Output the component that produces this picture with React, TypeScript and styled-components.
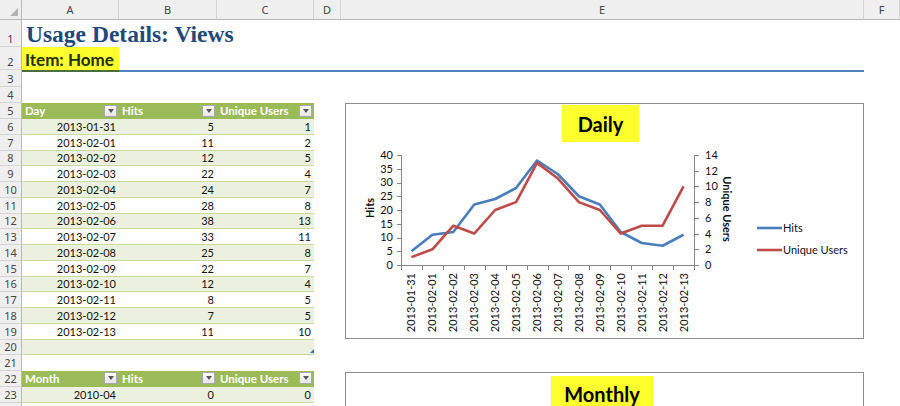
import React from "react";
import styled, { createGlobalStyle } from "styled-components";

const COLW = [22, 97, 98, 97, 27, 523];
const COLS = `${COLW.map((w) => w + "px").join(" ")} 1fr`;

const Global = createGlobalStyle`
  html, body { margin: 0; padding: 0; background: #fff; overflow: hidden; }
  body { font-family: Lato, "Liberation Sans", sans-serif; }
`;

const Sheet = styled.div`
  position: relative;
  width: 900px;
  height: 406px;
  overflow: hidden;
  background: #fff;
`;

const HeaderRow = styled.div`
  display: grid;
  grid-template-columns: ${COLS};
  height: 20px;
  box-sizing: border-box;
  background: #efefef;
  border-bottom: 1px solid #b9b9b9;
`;

const ColHead = styled.div<{ $corner?: boolean }>`
  position: relative;
  display: flex;
  align-items: center;
  justify-content: center;
  border-right: 1px solid ${(p) => (p.$corner ? "#b9b9b9" : "#d4d4d4")};
  font-family: "Noto Sans", "DejaVu Sans", sans-serif;
  font-size: 11px;
  color: #444;
  &::after {
    content: "";
    display: ${(p) => (p.$corner ? "block" : "none")};
    position: absolute;
    right: 3px;
    bottom: 3px;
    width: 0;
    height: 0;
    border-left: 8px solid transparent;
    border-bottom: 8px solid #b4b4b4;
  }
`;

const Row = styled.div<{ $h: number }>`
  display: grid;
  grid-template-columns: ${COLS};
  height: ${(p) => p.$h}px;
`;

const RowNum = styled.div<{ $bottom?: boolean }>`
  display: flex;
  align-items: ${(p) => (p.$bottom ? "flex-end" : "center")};
  justify-content: center;
  box-sizing: border-box;
  padding-bottom: ${(p) => (p.$bottom ? "2px" : "0")};
  background: #efefef;
  border-right: 1px solid #b9b9b9;
  border-bottom: 1px solid #d4d4d4;
  font-family: "Noto Sans", "DejaVu Sans", sans-serif;
  font-size: 11px;
  line-height: 1;
  color: #444;
`;

const TitleCell = styled.div`
  grid-column: 2 / span 5;
  display: flex;
  align-items: flex-end;
  padding: 0 0 1px 4px;
  font-family: "Liberation Serif", "DejaVu Serif", serif;
  font-weight: 700;
  font-size: 23.5px;
  line-height: 1;
  color: #1f497d;
  white-space: nowrap;
`;

const ItemCell = styled.div`
  display: flex;
  align-items: flex-end;
  padding: 0 0 2px 3px;
  background: #ffff2e;
  font-weight: 700;
  font-size: 17px;
  line-height: 1;
  color: #22300e;
  white-space: nowrap;
`;

const RuleCell = styled.div<{ $color: string; $span?: number }>`
  grid-column: span ${(p) => p.$span ?? 1};
  border-top: 2.5px solid ${(p) => p.$color};
`;

const Blank = styled.div<{ $span?: number }>`
  grid-column: span ${(p) => p.$span ?? 1};
`;

type Tone = "head" | "green" | "white";

const TCell = styled.div<{ $tone: Tone; $align?: "left" | "right"; $handle?: boolean }>`
  position: relative;
  display: flex;
  align-items: center;
  justify-content: ${(p) => (p.$align === "left" ? "space-between" : "flex-end")};
  box-sizing: border-box;
  padding: 0 3px 0 3px;
  background: ${(p) => (p.$tone === "head" ? "#9bbb59" : p.$tone === "green" ? "#ebf1de" : "#fff")};
  border-bottom: 1px solid ${(p) => (p.$tone === "head" ? "#9bbb59" : "#c9dba4")};
  color: ${(p) => (p.$tone === "head" ? "#fff" : "#111")};
  font-weight: ${(p) => (p.$tone === "head" ? 700 : 400)};
  font-size: ${(p) => (p.$tone === "head" ? "11.5px" : "11px")};
  line-height: 1;
  white-space: nowrap;
  &::after {
    content: "";
    display: ${(p) => (p.$handle ? "block" : "none")};
    position: absolute;
    right: 0;
    bottom: 1px;
    width: 0;
    height: 0;
    border-left: 4px solid transparent;
    border-bottom: 4px solid #3f6fb0;
  }
`;

const FilterBtn = styled.span`
  display: flex;
  align-items: center;
  justify-content: center;
  width: 13px;
  height: 12px;
  margin-right: -1px;
  box-sizing: border-box;
  border: 1px solid #a9a9a9;
  background: linear-gradient(#fbfbfb, #e6e6e6);
  &::before {
    content: "";
    width: 0;
    height: 0;
    border-left: 3.5px solid transparent;
    border-right: 3.5px solid transparent;
    border-top: 4px solid #555;
  }
`;

const ChartFrame = styled.div<{ $top: number; $height: number }>`
  position: absolute;
  left: 345px;
  top: ${(p) => p.$top}px;
  width: 519px;
  height: ${(p) => p.$height}px;
  box-sizing: border-box;
  border: 1px solid #8c8c8c;
  background: #fff;
  display: flex;
  flex-direction: column;
  align-items: flex-start;
`;

const ChartTitle = styled.div<{ $w: number; $h: number; $mt: number; $ml: number }>`
  width: ${(p) => p.$w}px;
  height: ${(p) => p.$h}px;
  margin: ${(p) => p.$mt}px 0 0 ${(p) => p.$ml}px;
  display: flex;
  align-items: center;
  justify-content: center;
  background: #ffff2e;
  font-weight: 700;
  font-size: 20px;
  color: #000;
  flex-shrink: 0;
`;

const PlotSvg = styled.svg`
  display: block;
  flex: none;
  font-family: Lato, "Liberation Sans", sans-serif;
`;

const days = [
  "2013-01-31", "2013-02-01", "2013-02-02", "2013-02-03", "2013-02-04", "2013-02-05", "2013-02-06",
  "2013-02-07", "2013-02-08", "2013-02-09", "2013-02-10", "2013-02-11", "2013-02-12", "2013-02-13",
];
const hits = [5, 11, 12, 22, 24, 28, 38, 33, 25, 22, 12, 8, 7, 11];
const users = [1, 2, 5, 4, 7, 8, 13, 11, 8, 7, 4, 5, 5, 10];

const X0 = 55;
const X1 = 348;
const Y0 = 123;
const PH = 110;
const CW = (X1 - X0) / 14;
const AX = "#868686";
const BLUE = "#4a7ebb";
const RED = "#be4b48";

function DailyPlot() {
  const cx = (i: number) => X0 + CW * (i + 0.5);
  const hy = (v: number) => Y0 - (v * PH) / 40;
  const uy = (v: number) => Y0 - (v * PH) / 14;
  const hitPts = hits.map((v, i) => `${cx(i)},${hy(v)}`).join(" ");
  const userPts = users.map((v, i) => `${cx(i)},${uy(v)}`).join(" ");
  const left = [0, 5, 10, 15, 20, 25, 30, 35, 40];
  const right = [0, 2, 4, 6, 8, 10, 12, 14];
  return (
    <PlotSvg width={517} height={196} viewBox="0 0 517 196">
      <g stroke={AX} strokeWidth={1}>
        <line x1={X0 + 0.5} y1={Y0 - PH} x2={X0 + 0.5} y2={Y0} />
        <line x1={X1 + 0.5} y1={Y0 - PH} x2={X1 + 0.5} y2={Y0} />
        <line x1={X0} y1={Y0 + 0.5} x2={X1 + 1} y2={Y0 + 0.5} />
        {left.map((v) => (
          <line key={"lt" + v} x1={X0 - 4} x2={X0} y1={Math.round(hy(v)) + 0.5} y2={Math.round(hy(v)) + 0.5} />
        ))}
        {right.map((v) => (
          <line key={"rt" + v} x1={X1 + 1} x2={X1 + 5} y1={Math.round(uy(v)) + 0.5} y2={Math.round(uy(v)) + 0.5} />
        ))}
        {Array.from({ length: 15 }, (_, i) => (
          <line key={"xt" + i} x1={Math.round(X0 + CW * i) + 0.5} x2={Math.round(X0 + CW * i) + 0.5} y1={Y0} y2={Y0 + 5} />
        ))}
      </g>
      <g fontSize={11} fill="#111">
        {left.map((v) => (
          <text key={"ll" + v} x={47} y={hy(v)} dy="0.36em" textAnchor="end">
            {v}
          </text>
        ))}
        {right.map((v) => (
          <text key={"rl" + v} x={359} y={uy(v)} dy="0.36em" textAnchor="start">
            {v}
          </text>
        ))}
        {days.map((d, i) => (
          <text key={d} transform={`translate(${cx(i)},131) rotate(-90)`} dy="0.36em" textAnchor="end">
            {d}
          </text>
        ))}
        <text transform="translate(24,66) rotate(-90)" dy="0.36em" textAnchor="middle" fontWeight={700}>
          Hits
        </text>
        <text transform="translate(381,67) rotate(90)" dy="0.36em" textAnchor="middle" fontWeight={700}>
          Unique Users
        </text>
        <text x={437} y={86} dy="0.36em">Hits</text>
        <text x={437} y={108} dy="0.36em">Unique Users</text>
      </g>
      <polyline points={hitPts} fill="none" stroke={BLUE} strokeWidth={2.6} strokeLinejoin="round" />
      <polyline points={userPts} fill="none" stroke={RED} strokeWidth={2.6} strokeLinejoin="round" />
      <line x1={411} x2={436} y1={86} y2={86} stroke={BLUE} strokeWidth={2.6} />
      <line x1={411} x2={436} y1={108} y2={108} stroke={RED} strokeWidth={2.6} />
    </PlotSvg>
  );
}

type DataRow = { n: number; tone: Tone; a: string; b: string; c: string; handle?: boolean };

const dailyRows: DataRow[] = days.map((d, i) => ({
  n: 6 + i,
  tone: i % 2 === 0 ? "green" : "white",
  a: d,
  b: String(hits[i]),
  c: String(users[i]),
}));

function TableHead({ n, first }: { n: number; first: string }) {
  return (
    <Row $h={n === 5 ? 16 : 15.75}>
      <RowNum>{n}</RowNum>
      <TCell $tone="head" $align="left">
        {first}
        <FilterBtn />
      </TCell>
      <TCell $tone="head" $align="left">
        Hits
        <FilterBtn />
      </TCell>
      <TCell $tone="head" $align="left">
        Unique Users
        <FilterBtn />
      </TCell>
      <Blank $span={3} />
    </Row>
  );
}

function DataLine({ r }: { r: DataRow }) {
  return (
    <Row $h={15.75}>
      <RowNum>{r.n}</RowNum>
      <TCell $tone={r.tone}>{r.a}</TCell>
      <TCell $tone={r.tone}>{r.b}</TCell>
      <TCell $tone={r.tone} $handle={r.handle}>
        {r.c}
      </TCell>
      <Blank $span={3} />
    </Row>
  );
}

function BlankRow({ n, h }: { n?: number; h: number }) {
  return (
    <Row $h={h}>
      <RowNum>{n}</RowNum>
      <Blank $span={6} />
    </Row>
  );
}

export default function App() {
  return (
    <>
      <Global />
      <Sheet>
        <HeaderRow>
          <ColHead $corner />
          {["A", "B", "C", "D", "E", "F"].map((c) => (
            <ColHead key={c}>{c}</ColHead>
          ))}
        </HeaderRow>
        <Row $h={27}>
          <RowNum $bottom>1</RowNum>
          <TitleCell>Usage Details: Views</TitleCell>
        </Row>
        <Row $h={23}>
          <RowNum $bottom>2</RowNum>
          <ItemCell>Item: Home</ItemCell>
          <Blank $span={5} />
        </Row>
        <Row $h={17}>
          <RowNum>3</RowNum>
          <RuleCell $color="#4a6f3c" />
          <RuleCell $color="#4f81bd" $span={4} />
          <Blank />
        </Row>
        <BlankRow n={4} h={16} />
        <TableHead n={5} first="Day" />
        {dailyRows.map((r) => (
          <DataLine key={r.n} r={r} />
        ))}
        <DataLine r={{ n: 20, tone: "green", a: "", b: "", c: "", handle: true }} />
        <BlankRow n={21} h={15.75} />
        <TableHead n={22} first="Month" />
        <DataLine r={{ n: 23, tone: "green", a: "2010-04", b: "0", c: "0" }} />
        <BlankRow h={15.75} />

        <ChartFrame $top={103} $height={236}>
          <ChartTitle $w={77} $h={37} $mt={1} $ml={216}>
            Daily
          </ChartTitle>
          <DailyPlot />
        </ChartFrame>
        <ChartFrame $top={372} $height={240}>
          <ChartTitle $w={102} $h={36} $mt={3} $ml={205}>
            Monthly
          </ChartTitle>
        </ChartFrame>
      </Sheet>
    </>
  );
}
